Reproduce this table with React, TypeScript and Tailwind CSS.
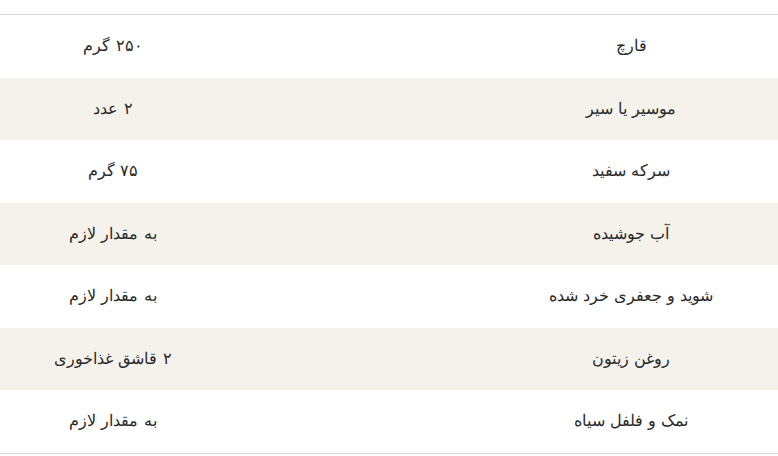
import React from 'react';

const rows: [string, string][] = [
  ['قارچ', '۲۵۰ گرم'],
  ['موسیر یا سیر', '۲ عدد'],
  ['سرکه سفید', '۷۵ گرم'],
  ['آب جوشیده', 'به مقدار لازم'],
  ['شوید و جعفری خرد شده', 'به مقدار لازم'],
  ['روغن زیتون', '۲ قاشق غذاخوری'],
  ['نمک و فلفل سیاه', 'به مقدار لازم'],
];

const App: React.FC = () => {
  return (
    <div className="w-[778px] h-[456px] bg-white pt-[14px]" style={{ fontFamily: '"DejaVu Sans", sans-serif' }}>
      <div dir="rtl" className="border-t border-b border-[#d4d4d4]">
        {rows.map(([name, amount], idx) => (
          <div
            key={idx}
            className={`flex items-center h-[62.5px] text-[16px] font-light text-[#2a2a2a] ${idx % 2 === 1 ? 'bg-[#f5f2ec]' : 'bg-white'}`}
          >
            <div className="w-[294px] text-center">{name}</div>
            <div className="flex-1"></div>
            <div className="w-[226px] text-center">{amount}</div>
          </div>
        ))}
      </div>
    </div>
  );
};

export default App;
